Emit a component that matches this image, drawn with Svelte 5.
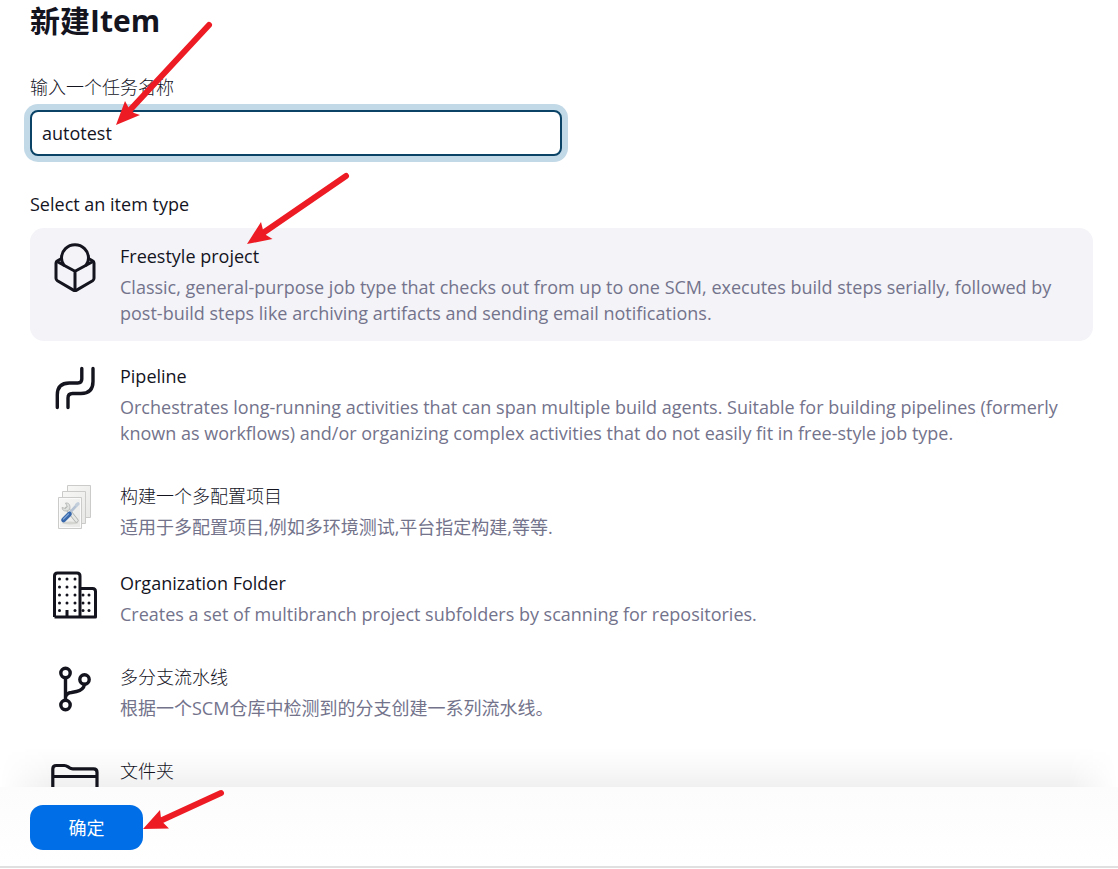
<script>
  let name = $state('autotest');
  let selected = $state('freestyle');

  const items = [
    {
      id: 'freestyle',
      title: 'Freestyle project',
      text: 'Classic, general-purpose job type that checks out from up to one SCM, executes build steps serially, followed by post-build steps like archiving artifacts and sending email notifications.'
    },
    {
      id: 'pipeline',
      title: 'Pipeline',
      text: 'Orchestrates long-running activities that can span multiple build agents. Suitable for building pipelines (formerly known as workflows) and/or organizing complex activities that do not easily fit in free-style job type.'
    },
    {
      id: 'matrix',
      title: '构建一个多配置项目',
      text: '适用于多配置项目,例如多环境测试,平台指定构建,等等.',
      zh: true,
      tight: true
    },
    {
      id: 'organization',
      title: 'Organization Folder',
      text: 'Creates a set of multibranch project subfolders by scanning for repositories.'
    },
    {
      id: 'multibranch',
      title: '多分支流水线',
      text: '根据一个SCM仓库中检测到的分支创建一系列流水线。',
      zh: true
    },
    { id: 'folder', title: '文件夹', text: '', zh: true }
  ];

  const dots = [
    [59.5, 579], [67, 579], [75, 579],
    [59.5, 587], [67, 587], [75, 587],
    [59.5, 595], [67, 595], [75, 595], [83, 595], [89, 595],
    [59.5, 603], [67, 603], [75, 603], [83, 603], [89, 603],
    [59.5, 610.5], [75, 610.5], [83, 610.5], [89, 610.5]
  ];
</script>

<div class="page">
  <main>
    <h1>新建Item</h1>
    <label class="caption zh" for="name">输入一个任务名称</label>
    <input id="name" class="name" type="text" bind:value={name} autocomplete="off" spellcheck="false" />

    <fieldset>
      <legend class="caption">Select an item type</legend>
      <div class="list">
        {#each items as item (item.id)}
          <label class="item" class:selected={selected === item.id} class:zh={item.zh} class:tight={item.tight}>
            <input class="radio" type="radio" name="mode" value={item.id} bind:group={selected} />
            <span class="icon">
              {#if item.id === 'freestyle'}
                <svg viewBox="51 244 48 48" fill="none" stroke="#14141f" stroke-width="3" stroke-linejoin="round" stroke-linecap="round">
                  <path d="M61.500 258.500l-4 2.200q-1.500.9-1.500 2.400v15.200q0 1.600 1.400 2.500l16 9.300q1.600.9 3.200 0l16-9.300q1.400-.9 1.400-2.500v-15.200q0-1.500-1.500-2.400l-4-2.200" />
                  <path d="M57 261.500l18 9.800 18-9.800M75 271.300V290.500" />
                  <path d="M63.800 265q-2.300-3-2.300-7a13.500 13.200 0 1 1 27 0q0 4-2.300 7" />
                </svg>
              {:else if item.id === 'pipeline'}
                <svg viewBox="51 364 48 48" fill="none" stroke="#14141f" stroke-width="3.400" stroke-linecap="round" stroke-linejoin="round">
                  <path d="M57.300 407.500V395q0-12 12-12h8.500q4 0 4-4V368.500" />
                  <path d="M68 407.500V398q0-4.500 4.500-4.500H81q12 0 12-12V368.500" />
                </svg>
              {:else if item.id === 'matrix'}
                <svg viewBox="51 484 48 48" fill="none">
                  <defs>
                    <linearGradient id="paper" x1="0" y1="0" x2="1" y2="1">
                      <stop offset="0" stop-color="#f7f7f6" />
                      <stop offset="1" stop-color="#e8e8e6" />
                    </linearGradient>
                  </defs>
                  <g fill="url(#paper)" stroke="#cbccc9">
                    <path d="M67.500 485.500h23v32h-23z" />
                    <path d="M62.500 491.500h23v32h-23z" />
                    <path d="M58.500 497.500h23v31h-23z" />
                  </g>
                  <path d="M59.500 498.500h21v29h-21z" stroke="#fafafa" />
                  <ellipse cx="70" cy="523" rx="8" ry="1.500" fill="#d4d4d1" />
                  <path d="M67 508.500l9.500 12" stroke="#b0b3b0" stroke-width="4.200" stroke-linecap="round" />
                  <path d="M67 508.500l9.500 12" stroke="#e6e8e5" stroke-width="2.600" stroke-linecap="round" />
                  <path d="M65.500 503a4 4 0 1 1-3.500 4.500l3.500 1 1.800-1.800z" fill="#dfe1de" stroke="#b0b3b0" stroke-width=".8" />
                  <path d="M69 513.500l7.500-8" stroke="#b4c2d3" stroke-width="2.600" stroke-linecap="round" />
                  <path d="M76.500 505l1.500-1.200" stroke="#c3cedb" stroke-width="3.400" stroke-linecap="round" />
                  <path d="M63.500 520l6-6" stroke="#3868ab" stroke-width="4.600" stroke-linecap="round" />
                  <path d="M63.500 519l5-5" stroke="#7ba2d4" stroke-width="1.400" stroke-linecap="round" />
                </svg>
              {:else if item.id === 'organization'}
                <svg viewBox="51 571 48 48" fill="none" stroke="#14141f" stroke-width="3" stroke-linejoin="round">
                  <path d="M54.500 617V576q0-3 3-3H77q3 0 3 3v41M80 588.500h12.500q3 0 3 3V617H54.500M67 610v7" />
                  {#each dots as [x, y]}
                    <circle cx={x} cy={y} r="1.500" fill="#14141f" stroke="none" />
                  {/each}
                </svg>
              {:else if item.id === 'multibranch'}
                <svg viewBox="51 665 48 48" fill="none" stroke="#14141f" stroke-width="3.400" stroke-linecap="round">
                  <circle cx="65.500" cy="673" r="4.700" />
                  <circle cx="84.500" cy="679.500" r="4.700" />
                  <circle cx="65.500" cy="705" r="4.700" />
                  <path d="M65.500 678v22M65.500 697q1-4 6-4.500l5-1q7-1.500 8-7" />
                </svg>
              {:else}
                <svg viewBox="51 759 48 48" fill="none" stroke="#14141f" stroke-width="3.200" stroke-linejoin="round">
                  <path d="M52.800 800V769q0-3.500 3.500-3.500h8q2 0 3.500 1.200l2 1.300q1 .8 3 .8H93.500q3.500 0 3.500 3.500V800q0 3-3.500 3H56.300q-3.500 0-3.500-3zM53 776.500H97" />
                </svg>
              {/if}
            </span>
            <span class="body">
              <span class="title">{item.title}</span>
              {#if item.text}<span class="text">{item.text}</span>{/if}
            </span>
          </label>
        {/each}
      </div>
    </fieldset>
  </main>

  <footer>
    <button type="button">确定</button>
  </footer>

  <svg class="arrows" width="360" height="840" viewBox="0 0 360 840" aria-hidden="true">
    <g stroke="#ed1c24" stroke-width="6" stroke-linecap="round">
      <path d="M209 25L130 110" />
      <path d="M346 176L263 233" />
      <path d="M221 793L160 821" />
    </g>
    <g fill="#ed1c24">
      <path d="M116 125L125 101 128.500 107.500 134 113 140 115z" />
      <path d="M247 244L261 222 263 230 266 235 272.500 239z" />
      <path d="M143 829L160 810 161 818 163.500 823 169 828.500z" />
    </g>
  </svg>
</div>

<style>
  :global(body) {
    margin: 0;
    background: #fff;
  }

  .page {
    position: relative;
    display: flex;
    flex-direction: column;
    height: 100vh;
    box-sizing: border-box;
    padding-bottom: 1px;
    overflow: hidden;
    color: #14141f;
    font: 18px/26px 'Open Sans', 'Noto Sans CJK SC', sans-serif;
  }

  main {
    flex: 1;
    min-height: 0;
    overflow: hidden;
    padding: 0 25px 0 30px;
  }

  h1 {
    margin: 0 0 32px;
    font-size: 30px;
    line-height: 42px;
    font-weight: 700;
  }

  .zh {
    font-weight: 300;
  }

  .caption {
    display: block;
    padding: 0;
  }

  .name {
    display: block;
    box-sizing: border-box;
    width: 50%;
    height: 46px;
    margin: 10px 0 35px;
    padding: 0 10px;
    border: 2px solid #0b4366;
    border-radius: 8px;
    outline: none;
    box-shadow: 0 0 0 6px #c2d9e7;
    background: #fff;
    color: inherit;
    font: inherit;
  }

  fieldset {
    margin: 0;
    padding: 0;
    border: 0;
    min-width: 0;
  }

  .list {
    padding-top: 11px;
  }

  .item {
    display: flex;
    gap: 21px;
    margin-bottom: 7px;
    padding: 15px 21px;
    border-radius: 14px;
    cursor: pointer;
  }

  .item.tight {
    margin-bottom: 0;
  }

  .item.selected {
    background: #f3f3f8;
  }

  .radio {
    position: absolute;
    opacity: 0;
    pointer-events: none;
  }

  .icon {
    flex: none;
    width: 48px;
    height: 48px;
    margin-top: 1px;
  }

  .icon svg {
    display: block;
    width: 48px;
    height: 48px;
    overflow: visible;
  }

  .body {
    display: flex;
    flex-direction: column;
    gap: 5px;
    min-width: 0;
  }

  .text {
    color: #73738c;
    font-weight: 400;
  }

  footer {
    position: relative;
    padding: 18px 30px 16px;
    border-bottom: 2px solid #e0e0e0;
    background: linear-gradient(#fcfcfc, #fff);
  }

  footer::before {
    content: '';
    position: absolute;
    right: 0;
    bottom: 100%;
    left: 0;
    height: 40px;
    background: linear-gradient(to top, rgba(0, 0, 0, 0.06), rgba(0, 0, 0, 0.025) 50%, transparent);
    mask-image: linear-gradient(to right, transparent, #000 50px, #000 calc(100% - 50px), transparent);
    pointer-events: none;
  }

  button {
    display: block;
    height: 45px;
    min-width: 113px;
    padding: 0 38px;
    border: 0;
    border-radius: 13px;
    background: #006ee6;
    color: #fff;
    font: inherit;
    cursor: pointer;
  }

  .arrows {
    position: absolute;
    top: 0;
    left: 0;
    pointer-events: none;
  }
</style>
